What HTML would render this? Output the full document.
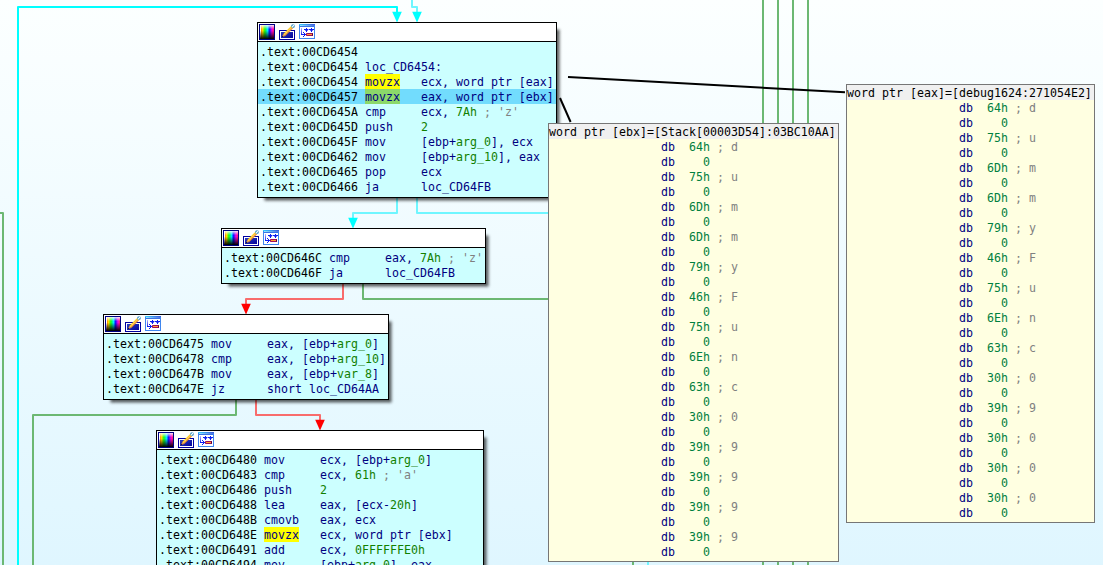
<!DOCTYPE html>
<html><head><meta charset="utf-8"><title>IDA graph view</title><style>
html,body{margin:0;padding:0}
body{width:1103px;height:565px;overflow:hidden;position:relative;background:linear-gradient(to bottom,#fcffff 0px,#dff6ff 565px);font-family:"DejaVu Sans Mono", "Liberation Mono", monospace;font-size:11.6px;letter-spacing:0.0162px;color:#000}
svg.lay{position:absolute;left:0;top:0}
.node{position:absolute;border:1px solid #000;background:#ccffff;box-shadow:4.5px 4.5px 3px -2px rgba(0,0,0,.66);overflow:hidden;box-sizing:content-box}
.hd{height:18px;background:#fff;border-bottom:1px solid #000;position:relative}
.ic{position:absolute;top:1px}
.bd{padding:2px 0 3px 2px}
.l{height:15px;line-height:16px;white-space:pre;position:relative}
.l span{position:relative}
.sel{background:#72dcfd;margin-left:-2px;padding-left:2px}
.k{color:#000080} .n{color:#128000} .c{color:#808080} .a{color:#000} .d{color:#008040}
.y,.yg{display:inline-block;height:15px;vertical-align:top}
.y{background:#ffff00} .yg{background:#8cd86a}
.tip{position:absolute;border:1px solid #767676;background:#ffffe1;padding-bottom:2px}
.tt{background:#f0f0f0}
</style></head>
<body>
<svg class="lay" width="1103" height="565" viewBox="0 0 1103 565"><polyline points="18,566 18,7 397,7 397,14" stroke="#00ffff" stroke-width="2" fill="none" stroke-linejoin="round"/><polygon points="392.2,11.7 401.8,11.7 397,22.5" fill="#00ffff"/><polyline points="412,-1 412,7 417,7 417,14" stroke="#6ff6ff" stroke-width="2" fill="none" stroke-linejoin="round"/><polygon points="412.2,11.7 421.8,11.7 417,22.5" fill="#00ffff"/><polyline points="397,198 397,213 353,213 353,219" stroke="#6ff6ff" stroke-width="2" fill="none" stroke-linejoin="round"/><polygon points="348.2,217.7 357.8,217.7 353,228.5" fill="#00ffff"/><polyline points="417,198 417,213 560,213" stroke="#6ff6ff" stroke-width="2" fill="none" stroke-linejoin="round"/><polyline points="343,284 343,299 246,299 246,305" stroke="#f86c6c" stroke-width="2" fill="none" stroke-linejoin="round"/><polygon points="241.2,303.7 250.8,303.7 246,314.5" fill="#ff0000"/><polyline points="363,284 363,299 560,299" stroke="#6cb873" stroke-width="2" fill="none" stroke-linejoin="round"/><polyline points="236,400 236,415 33,415 33,566" stroke="#6cb873" stroke-width="2" fill="none" stroke-linejoin="round"/><polyline points="256,400 256,415 320,415 320,421" stroke="#f86c6c" stroke-width="2" fill="none" stroke-linejoin="round"/><polygon points="315.2,419.7 324.8,419.7 320,430.5" fill="#ff0000"/><polyline points="-2,213 3,213 3,566" stroke="#6cb873" stroke-width="2" fill="none" stroke-linejoin="round"/><polyline points="763,-1 763,130" stroke="#6cb873" stroke-width="2" fill="none" stroke-linejoin="round"/><polyline points="763,555 763,566" stroke="#6cb873" stroke-width="2" fill="none" stroke-linejoin="round"/><polyline points="778,-1 778,130" stroke="#6cb873" stroke-width="2" fill="none" stroke-linejoin="round"/><polyline points="778,555 778,566" stroke="#6cb873" stroke-width="2" fill="none" stroke-linejoin="round"/><polyline points="793,-1 793,130" stroke="#6cb873" stroke-width="2" fill="none" stroke-linejoin="round"/><polyline points="793,555 793,566" stroke="#6cb873" stroke-width="2" fill="none" stroke-linejoin="round"/><polyline points="808,-1 808,130" stroke="#6cb873" stroke-width="2" fill="none" stroke-linejoin="round"/><polyline points="808,555 808,566" stroke="#6cb873" stroke-width="2" fill="none" stroke-linejoin="round"/><polyline points="633,555 633,566" stroke="#6cb873" stroke-width="2" fill="none" stroke-linejoin="round"/><polyline points="648,555 648,566" stroke="#6ff6ff" stroke-width="2" fill="none" stroke-linejoin="round"/></svg>
<div class="node" style="left:257px;top:22px;width:298px;"><div class="hd"><svg class="ic" style="left:1px" width="16" height="16" viewBox="0 0 16 16"><defs><linearGradient id="h1" x1="0" x2="1" y1="0" y2="0"><stop offset="0" stop-color="#ff8000"/><stop offset=".12" stop-color="#ffe000"/><stop offset=".3" stop-color="#10ff10"/><stop offset=".5" stop-color="#00e8ff"/><stop offset=".66" stop-color="#1010ff"/><stop offset=".85" stop-color="#ff00e0"/><stop offset="1" stop-color="#ff2060"/></linearGradient><linearGradient id="v1" x1="0" x2="0" y1="0" y2="1"><stop offset="0" stop-color="#fff" stop-opacity=".9"/><stop offset=".3" stop-color="#fff" stop-opacity="0"/><stop offset=".4" stop-color="#000" stop-opacity="0"/><stop offset="1" stop-color="#000" stop-opacity="1"/></linearGradient></defs><rect x="0" y="0" width="16" height="16" fill="#000084"/><rect x="1" y="1" width="14" height="14" fill="#fff"/><rect x="2" y="1" width="13" height="14" fill="url(#h1)"/><rect x="1" y="1" width="14" height="14" fill="url(#v1)"/></svg><svg class="ic" style="left:21px" width="16" height="16" viewBox="0 0 16 16"><defs><linearGradient id="b1" x1="0" x2="1" y1="0" y2="1"><stop offset="0" stop-color="#2a3cc0"/><stop offset="1" stop-color="#04049a"/></linearGradient></defs><rect x="0.5" y="6.5" width="15" height="9" fill="#fff" stroke="#0000a0"/><rect x="2" y="8" width="12" height="6" fill="url(#b1)"/><path d="M5.3 11.1 L13.3 3.1" stroke="#ee8a1c" stroke-width="2.7"/><path d="M4.7 10.5 L12.7 2.5" stroke="#ffd21e" stroke-width="1.3"/><path d="M5.3 11.1 L13.3 3.1" stroke="#fff8d8" stroke-width="0.8" stroke-dasharray="0.8 0.4"/><path d="M2.9 13.1 L4.3 10.1 L6.3 12.1 Z" fill="#e8a050"/><path d="M2.8 13.2 L3.5 11.8 L4.4 12.6 Z" fill="#000"/><circle cx="14" cy="2.1" r="1.9" fill="#3a96c8"/><path d="M13.3 2.8 L14.7 1.4" stroke="#fff" stroke-width="1.2" stroke-linecap="round"/></svg><svg class="ic" style="left:41px" width="16" height="16" viewBox="0 0 16 16"><defs><linearGradient id="t1" x1="0" x2="1" y1="0" y2="0"><stop offset="0" stop-color="#38ccff"/><stop offset="1" stop-color="#3a58dc"/></linearGradient><linearGradient id="u1" x1="0" x2="1" y1="0" y2="0"><stop offset="0" stop-color="#8cf0ff"/><stop offset="1" stop-color="#5070e4"/></linearGradient><linearGradient id="w1" x1="0" x2="0" y1="0" y2="1"><stop offset="0" stop-color="#b8b8ff"/><stop offset="1" stop-color="#0818f0"/></linearGradient></defs><rect x="0.5" y="0.5" width="15" height="14" fill="#fff" stroke="#3f86ee"/><rect x="0" y="0" width="16" height="1" fill="url(#t1)"/><rect x="1" y="1" width="14" height="1" fill="url(#u1)"/><rect x="1" y="2" width="14" height="1" fill="#3a74e6"/><rect x="2" y="4" width="1" height="7" fill="url(#w1)"/><g fill="#0c1cf0"><rect x="2" y="10" width="5" height="1"/><rect x="4" y="8" width="1" height="1"/><rect x="5" y="9" width="1" height="1"/><rect x="5" y="11" width="1" height="1"/><rect x="4" y="12" width="1" height="1"/><rect x="5" y="5" width="1" height="1"/><rect x="7" y="4" width="1" height="4"/><rect x="6" y="5" width="3" height="1.6"/><rect x="12" y="4" width="1" height="4"/><rect x="11" y="5" width="3" height="1.6"/><rect x="9.6" y="5" width="1.4" height="1"/><rect x="14" y="5" width="1" height="1"/></g><rect x="7" y="9" width="7" height="3" rx="0.7" fill="#a00c5c"/><rect x="13" y="9.3" width="1" height="2.4" fill="#58003c"/><rect x="8" y="10" width="5" height="1" fill="#ffa030"/></svg></div><div class="bd"><div class="l"><span class="a">.text:00CD6454</span></div><div class="l"><span class="a">.text:00CD6454 </span><span class="k">loc_CD6454:</span></div><div class="l"><span class="a">.text:00CD6454 </span><span class="k y">movzx</span><span class="k">   ecx, word ptr [eax]</span></div><div class="l sel"><span class="a">.text:00CD6457 </span><span class="k yg">movzx</span><span class="k">   eax, word ptr [ebx]</span></div><div class="l"><span class="a">.text:00CD645A </span><span class="k">cmp     </span><span class="k">ecx, </span><span class="n">7Ah</span><span class="c"> ; 'z'</span></div><div class="l"><span class="a">.text:00CD645D </span><span class="k">push    </span><span class="n">2</span></div><div class="l"><span class="a">.text:00CD645F </span><span class="k">mov     </span><span class="k">[ebp+</span><span class="n">arg_0</span><span class="k">], ecx</span></div><div class="l"><span class="a">.text:00CD6462 </span><span class="k">mov     </span><span class="k">[ebp+</span><span class="n">arg_10</span><span class="k">], eax</span></div><div class="l"><span class="a">.text:00CD6465 </span><span class="k">pop     </span><span class="k">ecx</span></div><div class="l"><span class="a">.text:00CD6466 </span><span class="k">ja      </span><span class="k">loc_CD64FB</span></div></div></div><div class="node" style="left:221px;top:228px;width:263px;"><div class="hd"><svg class="ic" style="left:1px" width="16" height="16" viewBox="0 0 16 16"><defs><linearGradient id="h2" x1="0" x2="1" y1="0" y2="0"><stop offset="0" stop-color="#ff8000"/><stop offset=".12" stop-color="#ffe000"/><stop offset=".3" stop-color="#10ff10"/><stop offset=".5" stop-color="#00e8ff"/><stop offset=".66" stop-color="#1010ff"/><stop offset=".85" stop-color="#ff00e0"/><stop offset="1" stop-color="#ff2060"/></linearGradient><linearGradient id="v2" x1="0" x2="0" y1="0" y2="1"><stop offset="0" stop-color="#fff" stop-opacity=".9"/><stop offset=".3" stop-color="#fff" stop-opacity="0"/><stop offset=".4" stop-color="#000" stop-opacity="0"/><stop offset="1" stop-color="#000" stop-opacity="1"/></linearGradient></defs><rect x="0" y="0" width="16" height="16" fill="#000084"/><rect x="1" y="1" width="14" height="14" fill="#fff"/><rect x="2" y="1" width="13" height="14" fill="url(#h2)"/><rect x="1" y="1" width="14" height="14" fill="url(#v2)"/></svg><svg class="ic" style="left:21px" width="16" height="16" viewBox="0 0 16 16"><defs><linearGradient id="b2" x1="0" x2="1" y1="0" y2="1"><stop offset="0" stop-color="#2a3cc0"/><stop offset="1" stop-color="#04049a"/></linearGradient></defs><rect x="0.5" y="6.5" width="15" height="9" fill="#fff" stroke="#0000a0"/><rect x="2" y="8" width="12" height="6" fill="url(#b2)"/><path d="M5.3 11.1 L13.3 3.1" stroke="#ee8a1c" stroke-width="2.7"/><path d="M4.7 10.5 L12.7 2.5" stroke="#ffd21e" stroke-width="1.3"/><path d="M5.3 11.1 L13.3 3.1" stroke="#fff8d8" stroke-width="0.8" stroke-dasharray="0.8 0.4"/><path d="M2.9 13.1 L4.3 10.1 L6.3 12.1 Z" fill="#e8a050"/><path d="M2.8 13.2 L3.5 11.8 L4.4 12.6 Z" fill="#000"/><circle cx="14" cy="2.1" r="1.9" fill="#3a96c8"/><path d="M13.3 2.8 L14.7 1.4" stroke="#fff" stroke-width="1.2" stroke-linecap="round"/></svg><svg class="ic" style="left:41px" width="16" height="16" viewBox="0 0 16 16"><defs><linearGradient id="t2" x1="0" x2="1" y1="0" y2="0"><stop offset="0" stop-color="#38ccff"/><stop offset="1" stop-color="#3a58dc"/></linearGradient><linearGradient id="u2" x1="0" x2="1" y1="0" y2="0"><stop offset="0" stop-color="#8cf0ff"/><stop offset="1" stop-color="#5070e4"/></linearGradient><linearGradient id="w2" x1="0" x2="0" y1="0" y2="1"><stop offset="0" stop-color="#b8b8ff"/><stop offset="1" stop-color="#0818f0"/></linearGradient></defs><rect x="0.5" y="0.5" width="15" height="14" fill="#fff" stroke="#3f86ee"/><rect x="0" y="0" width="16" height="1" fill="url(#t2)"/><rect x="1" y="1" width="14" height="1" fill="url(#u2)"/><rect x="1" y="2" width="14" height="1" fill="#3a74e6"/><rect x="2" y="4" width="1" height="7" fill="url(#w2)"/><g fill="#0c1cf0"><rect x="2" y="10" width="5" height="1"/><rect x="4" y="8" width="1" height="1"/><rect x="5" y="9" width="1" height="1"/><rect x="5" y="11" width="1" height="1"/><rect x="4" y="12" width="1" height="1"/><rect x="5" y="5" width="1" height="1"/><rect x="7" y="4" width="1" height="4"/><rect x="6" y="5" width="3" height="1.6"/><rect x="12" y="4" width="1" height="4"/><rect x="11" y="5" width="3" height="1.6"/><rect x="9.6" y="5" width="1.4" height="1"/><rect x="14" y="5" width="1" height="1"/></g><rect x="7" y="9" width="7" height="3" rx="0.7" fill="#a00c5c"/><rect x="13" y="9.3" width="1" height="2.4" fill="#58003c"/><rect x="8" y="10" width="5" height="1" fill="#ffa030"/></svg></div><div class="bd"><div class="l"><span class="a">.text:00CD646C </span><span class="k">cmp     </span><span class="k">eax, </span><span class="n">7Ah</span><span class="c"> ; 'z'</span></div><div class="l"><span class="a">.text:00CD646F </span><span class="k">ja      </span><span class="k">loc_CD64FB</span></div></div></div><div class="node" style="left:103px;top:314px;width:284px;"><div class="hd"><svg class="ic" style="left:1px" width="16" height="16" viewBox="0 0 16 16"><defs><linearGradient id="h3" x1="0" x2="1" y1="0" y2="0"><stop offset="0" stop-color="#ff8000"/><stop offset=".12" stop-color="#ffe000"/><stop offset=".3" stop-color="#10ff10"/><stop offset=".5" stop-color="#00e8ff"/><stop offset=".66" stop-color="#1010ff"/><stop offset=".85" stop-color="#ff00e0"/><stop offset="1" stop-color="#ff2060"/></linearGradient><linearGradient id="v3" x1="0" x2="0" y1="0" y2="1"><stop offset="0" stop-color="#fff" stop-opacity=".9"/><stop offset=".3" stop-color="#fff" stop-opacity="0"/><stop offset=".4" stop-color="#000" stop-opacity="0"/><stop offset="1" stop-color="#000" stop-opacity="1"/></linearGradient></defs><rect x="0" y="0" width="16" height="16" fill="#000084"/><rect x="1" y="1" width="14" height="14" fill="#fff"/><rect x="2" y="1" width="13" height="14" fill="url(#h3)"/><rect x="1" y="1" width="14" height="14" fill="url(#v3)"/></svg><svg class="ic" style="left:21px" width="16" height="16" viewBox="0 0 16 16"><defs><linearGradient id="b3" x1="0" x2="1" y1="0" y2="1"><stop offset="0" stop-color="#2a3cc0"/><stop offset="1" stop-color="#04049a"/></linearGradient></defs><rect x="0.5" y="6.5" width="15" height="9" fill="#fff" stroke="#0000a0"/><rect x="2" y="8" width="12" height="6" fill="url(#b3)"/><path d="M5.3 11.1 L13.3 3.1" stroke="#ee8a1c" stroke-width="2.7"/><path d="M4.7 10.5 L12.7 2.5" stroke="#ffd21e" stroke-width="1.3"/><path d="M5.3 11.1 L13.3 3.1" stroke="#fff8d8" stroke-width="0.8" stroke-dasharray="0.8 0.4"/><path d="M2.9 13.1 L4.3 10.1 L6.3 12.1 Z" fill="#e8a050"/><path d="M2.8 13.2 L3.5 11.8 L4.4 12.6 Z" fill="#000"/><circle cx="14" cy="2.1" r="1.9" fill="#3a96c8"/><path d="M13.3 2.8 L14.7 1.4" stroke="#fff" stroke-width="1.2" stroke-linecap="round"/></svg><svg class="ic" style="left:41px" width="16" height="16" viewBox="0 0 16 16"><defs><linearGradient id="t3" x1="0" x2="1" y1="0" y2="0"><stop offset="0" stop-color="#38ccff"/><stop offset="1" stop-color="#3a58dc"/></linearGradient><linearGradient id="u3" x1="0" x2="1" y1="0" y2="0"><stop offset="0" stop-color="#8cf0ff"/><stop offset="1" stop-color="#5070e4"/></linearGradient><linearGradient id="w3" x1="0" x2="0" y1="0" y2="1"><stop offset="0" stop-color="#b8b8ff"/><stop offset="1" stop-color="#0818f0"/></linearGradient></defs><rect x="0.5" y="0.5" width="15" height="14" fill="#fff" stroke="#3f86ee"/><rect x="0" y="0" width="16" height="1" fill="url(#t3)"/><rect x="1" y="1" width="14" height="1" fill="url(#u3)"/><rect x="1" y="2" width="14" height="1" fill="#3a74e6"/><rect x="2" y="4" width="1" height="7" fill="url(#w3)"/><g fill="#0c1cf0"><rect x="2" y="10" width="5" height="1"/><rect x="4" y="8" width="1" height="1"/><rect x="5" y="9" width="1" height="1"/><rect x="5" y="11" width="1" height="1"/><rect x="4" y="12" width="1" height="1"/><rect x="5" y="5" width="1" height="1"/><rect x="7" y="4" width="1" height="4"/><rect x="6" y="5" width="3" height="1.6"/><rect x="12" y="4" width="1" height="4"/><rect x="11" y="5" width="3" height="1.6"/><rect x="9.6" y="5" width="1.4" height="1"/><rect x="14" y="5" width="1" height="1"/></g><rect x="7" y="9" width="7" height="3" rx="0.7" fill="#a00c5c"/><rect x="13" y="9.3" width="1" height="2.4" fill="#58003c"/><rect x="8" y="10" width="5" height="1" fill="#ffa030"/></svg></div><div class="bd"><div class="l"><span class="a">.text:00CD6475 </span><span class="k">mov     </span><span class="k">eax, [ebp+</span><span class="n">arg_0</span><span class="k">]</span></div><div class="l"><span class="a">.text:00CD6478 </span><span class="k">cmp     </span><span class="k">eax, [ebp+</span><span class="n">arg_10</span><span class="k">]</span></div><div class="l"><span class="a">.text:00CD647B </span><span class="k">mov     </span><span class="k">eax, [ebp+</span><span class="n">var_8</span><span class="k">]</span></div><div class="l"><span class="a">.text:00CD647E </span><span class="k">jz      </span><span class="k">short loc_CD64AA</span></div></div></div><div class="node" style="left:156px;top:430px;width:326px;height:160px;"><div class="hd"><svg class="ic" style="left:1px" width="16" height="16" viewBox="0 0 16 16"><defs><linearGradient id="h4" x1="0" x2="1" y1="0" y2="0"><stop offset="0" stop-color="#ff8000"/><stop offset=".12" stop-color="#ffe000"/><stop offset=".3" stop-color="#10ff10"/><stop offset=".5" stop-color="#00e8ff"/><stop offset=".66" stop-color="#1010ff"/><stop offset=".85" stop-color="#ff00e0"/><stop offset="1" stop-color="#ff2060"/></linearGradient><linearGradient id="v4" x1="0" x2="0" y1="0" y2="1"><stop offset="0" stop-color="#fff" stop-opacity=".9"/><stop offset=".3" stop-color="#fff" stop-opacity="0"/><stop offset=".4" stop-color="#000" stop-opacity="0"/><stop offset="1" stop-color="#000" stop-opacity="1"/></linearGradient></defs><rect x="0" y="0" width="16" height="16" fill="#000084"/><rect x="1" y="1" width="14" height="14" fill="#fff"/><rect x="2" y="1" width="13" height="14" fill="url(#h4)"/><rect x="1" y="1" width="14" height="14" fill="url(#v4)"/></svg><svg class="ic" style="left:21px" width="16" height="16" viewBox="0 0 16 16"><defs><linearGradient id="b4" x1="0" x2="1" y1="0" y2="1"><stop offset="0" stop-color="#2a3cc0"/><stop offset="1" stop-color="#04049a"/></linearGradient></defs><rect x="0.5" y="6.5" width="15" height="9" fill="#fff" stroke="#0000a0"/><rect x="2" y="8" width="12" height="6" fill="url(#b4)"/><path d="M5.3 11.1 L13.3 3.1" stroke="#ee8a1c" stroke-width="2.7"/><path d="M4.7 10.5 L12.7 2.5" stroke="#ffd21e" stroke-width="1.3"/><path d="M5.3 11.1 L13.3 3.1" stroke="#fff8d8" stroke-width="0.8" stroke-dasharray="0.8 0.4"/><path d="M2.9 13.1 L4.3 10.1 L6.3 12.1 Z" fill="#e8a050"/><path d="M2.8 13.2 L3.5 11.8 L4.4 12.6 Z" fill="#000"/><circle cx="14" cy="2.1" r="1.9" fill="#3a96c8"/><path d="M13.3 2.8 L14.7 1.4" stroke="#fff" stroke-width="1.2" stroke-linecap="round"/></svg><svg class="ic" style="left:41px" width="16" height="16" viewBox="0 0 16 16"><defs><linearGradient id="t4" x1="0" x2="1" y1="0" y2="0"><stop offset="0" stop-color="#38ccff"/><stop offset="1" stop-color="#3a58dc"/></linearGradient><linearGradient id="u4" x1="0" x2="1" y1="0" y2="0"><stop offset="0" stop-color="#8cf0ff"/><stop offset="1" stop-color="#5070e4"/></linearGradient><linearGradient id="w4" x1="0" x2="0" y1="0" y2="1"><stop offset="0" stop-color="#b8b8ff"/><stop offset="1" stop-color="#0818f0"/></linearGradient></defs><rect x="0.5" y="0.5" width="15" height="14" fill="#fff" stroke="#3f86ee"/><rect x="0" y="0" width="16" height="1" fill="url(#t4)"/><rect x="1" y="1" width="14" height="1" fill="url(#u4)"/><rect x="1" y="2" width="14" height="1" fill="#3a74e6"/><rect x="2" y="4" width="1" height="7" fill="url(#w4)"/><g fill="#0c1cf0"><rect x="2" y="10" width="5" height="1"/><rect x="4" y="8" width="1" height="1"/><rect x="5" y="9" width="1" height="1"/><rect x="5" y="11" width="1" height="1"/><rect x="4" y="12" width="1" height="1"/><rect x="5" y="5" width="1" height="1"/><rect x="7" y="4" width="1" height="4"/><rect x="6" y="5" width="3" height="1.6"/><rect x="12" y="4" width="1" height="4"/><rect x="11" y="5" width="3" height="1.6"/><rect x="9.6" y="5" width="1.4" height="1"/><rect x="14" y="5" width="1" height="1"/></g><rect x="7" y="9" width="7" height="3" rx="0.7" fill="#a00c5c"/><rect x="13" y="9.3" width="1" height="2.4" fill="#58003c"/><rect x="8" y="10" width="5" height="1" fill="#ffa030"/></svg></div><div class="bd"><div class="l"><span class="a">.text:00CD6480 </span><span class="k">mov     </span><span class="k">ecx, [ebp+</span><span class="n">arg_0</span><span class="k">]</span></div><div class="l"><span class="a">.text:00CD6483 </span><span class="k">cmp     </span><span class="k">ecx, </span><span class="n">61h</span><span class="c"> ; 'a'</span></div><div class="l"><span class="a">.text:00CD6486 </span><span class="k">push    </span><span class="n">2</span></div><div class="l"><span class="a">.text:00CD6488 </span><span class="k">lea     </span><span class="k">eax, [ecx-</span><span class="n">20h</span><span class="k">]</span></div><div class="l"><span class="a">.text:00CD648B </span><span class="k">cmovb   </span><span class="k">eax, ecx</span></div><div class="l"><span class="a">.text:00CD648E </span><span class="k y">movzx</span><span class="k">   ecx, word ptr [ebx]</span></div><div class="l"><span class="a">.text:00CD6491 </span><span class="k">add     </span><span class="k">ecx, </span><span class="n">0FFFFFFE0h</span></div><div class="l"><span class="a">.text:00CD6494 </span><span class="k">mov     </span><span class="k">[ebp+</span><span class="n">arg_0</span><span class="k">], eax</span></div><div class="l"><span class="a">.text:00CD6497 </span><span class="k">mov     </span><span class="k">eax, [ebp+</span><span class="n">arg_10</span><span class="k">]</span></div></div></div>
<svg class="lay" width="1103" height="565" viewBox="0 0 1103 565"><line x1="568" y1="77" x2="845" y2="92.3" stroke="#000" stroke-width="2"/><line x1="560" y1="98" x2="570.6" y2="122" stroke="#000" stroke-width="2"/></svg>
<div class="tip" style="left:548px;top:123px;width:289px"><div class="l tt">word ptr [ebx]=[Stack[00003D54]:03BC10AA]</div><div class="l">                <span class="k">db</span>  <span class="d">64h</span><span class="c"> ; d</span></div><div class="l">                <span class="k">db</span>    <span class="d">0</span></div><div class="l">                <span class="k">db</span>  <span class="d">75h</span><span class="c"> ; u</span></div><div class="l">                <span class="k">db</span>    <span class="d">0</span></div><div class="l">                <span class="k">db</span>  <span class="d">6Dh</span><span class="c"> ; m</span></div><div class="l">                <span class="k">db</span>    <span class="d">0</span></div><div class="l">                <span class="k">db</span>  <span class="d">6Dh</span><span class="c"> ; m</span></div><div class="l">                <span class="k">db</span>    <span class="d">0</span></div><div class="l">                <span class="k">db</span>  <span class="d">79h</span><span class="c"> ; y</span></div><div class="l">                <span class="k">db</span>    <span class="d">0</span></div><div class="l">                <span class="k">db</span>  <span class="d">46h</span><span class="c"> ; F</span></div><div class="l">                <span class="k">db</span>    <span class="d">0</span></div><div class="l">                <span class="k">db</span>  <span class="d">75h</span><span class="c"> ; u</span></div><div class="l">                <span class="k">db</span>    <span class="d">0</span></div><div class="l">                <span class="k">db</span>  <span class="d">6Eh</span><span class="c"> ; n</span></div><div class="l">                <span class="k">db</span>    <span class="d">0</span></div><div class="l">                <span class="k">db</span>  <span class="d">63h</span><span class="c"> ; c</span></div><div class="l">                <span class="k">db</span>    <span class="d">0</span></div><div class="l">                <span class="k">db</span>  <span class="d">30h</span><span class="c"> ; 0</span></div><div class="l">                <span class="k">db</span>    <span class="d">0</span></div><div class="l">                <span class="k">db</span>  <span class="d">39h</span><span class="c"> ; 9</span></div><div class="l">                <span class="k">db</span>    <span class="d">0</span></div><div class="l">                <span class="k">db</span>  <span class="d">39h</span><span class="c"> ; 9</span></div><div class="l">                <span class="k">db</span>    <span class="d">0</span></div><div class="l">                <span class="k">db</span>  <span class="d">39h</span><span class="c"> ; 9</span></div><div class="l">                <span class="k">db</span>    <span class="d">0</span></div><div class="l">                <span class="k">db</span>  <span class="d">39h</span><span class="c"> ; 9</span></div><div class="l">                <span class="k">db</span>    <span class="d">0</span></div></div><div class="tip" style="left:846px;top:84px;width:247px"><div class="l tt">word ptr [eax]=[debug1624:271054E2]</div><div class="l">                <span class="k">db</span>  <span class="d">64h</span><span class="c"> ; d</span></div><div class="l">                <span class="k">db</span>    <span class="d">0</span></div><div class="l">                <span class="k">db</span>  <span class="d">75h</span><span class="c"> ; u</span></div><div class="l">                <span class="k">db</span>    <span class="d">0</span></div><div class="l">                <span class="k">db</span>  <span class="d">6Dh</span><span class="c"> ; m</span></div><div class="l">                <span class="k">db</span>    <span class="d">0</span></div><div class="l">                <span class="k">db</span>  <span class="d">6Dh</span><span class="c"> ; m</span></div><div class="l">                <span class="k">db</span>    <span class="d">0</span></div><div class="l">                <span class="k">db</span>  <span class="d">79h</span><span class="c"> ; y</span></div><div class="l">                <span class="k">db</span>    <span class="d">0</span></div><div class="l">                <span class="k">db</span>  <span class="d">46h</span><span class="c"> ; F</span></div><div class="l">                <span class="k">db</span>    <span class="d">0</span></div><div class="l">                <span class="k">db</span>  <span class="d">75h</span><span class="c"> ; u</span></div><div class="l">                <span class="k">db</span>    <span class="d">0</span></div><div class="l">                <span class="k">db</span>  <span class="d">6Eh</span><span class="c"> ; n</span></div><div class="l">                <span class="k">db</span>    <span class="d">0</span></div><div class="l">                <span class="k">db</span>  <span class="d">63h</span><span class="c"> ; c</span></div><div class="l">                <span class="k">db</span>    <span class="d">0</span></div><div class="l">                <span class="k">db</span>  <span class="d">30h</span><span class="c"> ; 0</span></div><div class="l">                <span class="k">db</span>    <span class="d">0</span></div><div class="l">                <span class="k">db</span>  <span class="d">39h</span><span class="c"> ; 9</span></div><div class="l">                <span class="k">db</span>    <span class="d">0</span></div><div class="l">                <span class="k">db</span>  <span class="d">30h</span><span class="c"> ; 0</span></div><div class="l">                <span class="k">db</span>    <span class="d">0</span></div><div class="l">                <span class="k">db</span>  <span class="d">30h</span><span class="c"> ; 0</span></div><div class="l">                <span class="k">db</span>    <span class="d">0</span></div><div class="l">                <span class="k">db</span>  <span class="d">30h</span><span class="c"> ; 0</span></div><div class="l">                <span class="k">db</span>    <span class="d">0</span></div></div>
</body></html>
